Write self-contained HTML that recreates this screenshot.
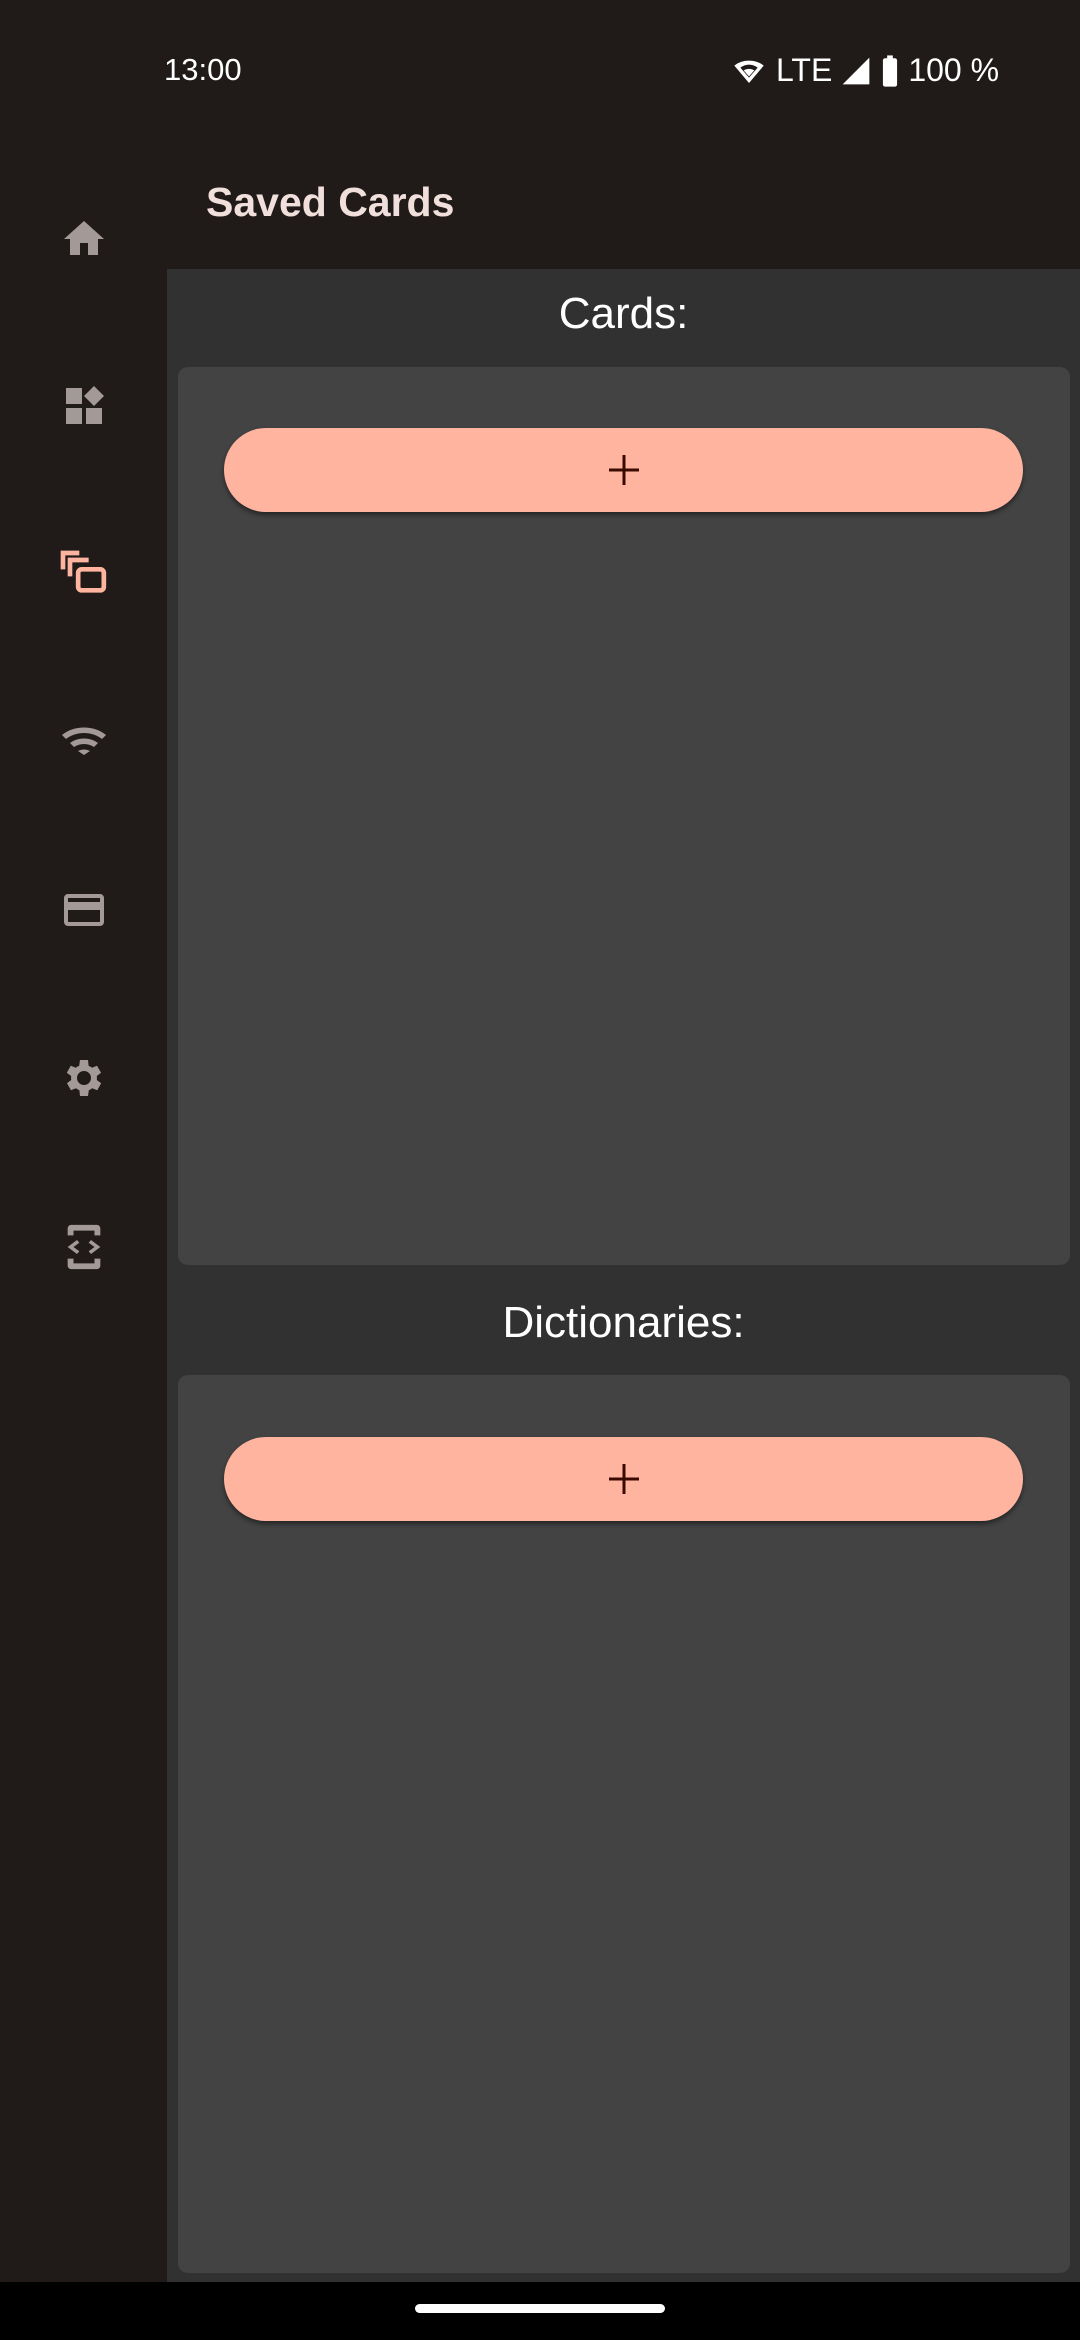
<!DOCTYPE html>
<html><head><meta charset="utf-8"><style>
*{margin:0;padding:0;box-sizing:border-box}
body{width:1080px;height:2340px;background:#201b19;position:relative;overflow:hidden;font-family:"Liberation Sans",sans-serif}
.abs{position:absolute}
.content{left:167px;top:269px;width:913px;height:2013px;background:#313131}
.panel{left:178px;width:892px;height:898px;background:#434343;border-radius:10px}
.btn{left:224px;width:799px;height:84px;background:#ffb4a0;border-radius:42px;box-shadow:0 3px 5px rgba(0,0,0,.45);display:flex;align-items:center;justify-content:center}
.lbl{left:167px;width:913px;text-align:center;color:#fff;font-size:44px}
.ic{left:60px;width:48px;height:48px}
</style></head><body>
<div class="abs" style="left:164px;top:52px;color:#fff;font-size:31px">13:00</div>
<div class="abs" style="left:730px;top:52px;color:#fff;font-size:32px;display:flex;align-items:center;gap:8px">
<svg width="38" height="32" viewBox="0 0 24 24"><path d="M12 21L1 8c6-5 16-5 22 0z" fill="#fff"/><path d="M5.5 9.5c4-3 9-3 13 0L12 17z" fill="#201b19"/><path d="M8 11.5c2.5-1.5 5.5-1.5 8 0L12 16z" fill="#fff"/></svg>
<span>LTE</span>
<svg width="32" height="32" viewBox="0 0 24 24"><path d="M22 2v20H2z" fill="#fff"/></svg>
<svg width="20" height="34" viewBox="0 0 12 24"><rect x="1" y="3" width="10" height="20" rx="1.5" fill="#fff"/><rect x="4" y="1" width="4" height="3" fill="#fff"/></svg>
<span>100 %</span></div>
<div class="abs" style="left:206px;top:179px;color:#f0dfdb;font-size:41px;font-weight:bold">Saved Cards</div>
<div class="abs content"></div>
<div class="abs lbl" style="top:289px">Cards:</div>
<div class="abs panel" style="top:367px"></div>
<div class="abs btn" style="top:428px"><svg width="36" height="36" viewBox="0 0 36 36"><path d="M18 3v30M3 18h30" stroke="#3a0a00" stroke-width="3"/></svg></div>
<div class="abs lbl" style="top:1298px">Dictionaries:</div>
<div class="abs panel" style="top:1375px"></div>
<div class="abs btn" style="top:1437px"><svg width="36" height="36" viewBox="0 0 36 36"><path d="M18 3v30M3 18h30" stroke="#3a0a00" stroke-width="3"/></svg></div>
<div class="abs" style="left:0;top:2282px;width:1080px;height:58px;background:#000"></div>
<div class="abs" style="left:415px;top:2304px;width:250px;height:9px;border-radius:5px;background:#fff"></div>
<svg class="abs ic" style="top:215px" viewBox="0 0 24 24"><path d="M10 20v-6h4v6h5v-8h3L12 3 2 12h3v8z" fill="#a39a98"/></svg>
<svg class="abs ic" style="top:382px" viewBox="0 0 24 24"><path d="M3 3h8v8H3zM3 13h8v8H3zM13 13h8v8h-8zM17 2l5 5-5 5-5-5z" fill="#a39a98"/></svg>
<svg class="abs" style="left:56px;top:546px;width:56px;height:56px" viewBox="0 0 24 24" fill="none" stroke="#ffb4a0" stroke-width="2"><path d="M3 10V3h7M6 13V6h8"/><rect x="9.5" y="10" width="11" height="9" rx="1.5"/></svg>
<svg class="abs ic" style="top:717px" viewBox="0 0 24 24"><path d="M1 9c6-5 16-5 22 0l-2 2c-5-4-13-4-18 0z M5 13c4-3 10-3 14 0l-2 2c-3-2-7-2-10 0z M9 17c2-1 4-1 6 0l-3 2z" fill="#a39a98"/></svg>
<svg class="abs ic" style="top:886px" viewBox="0 0 24 24"><path d="M4 4h16a2 2 0 0 1 2 2v12a2 2 0 0 1-2 2H4a2 2 0 0 1-2-2V6a2 2 0 0 1 2-2zm0 4h16V6H4zm0 4v6h16v-6z" fill="#a39a98"/></svg>
<svg class="abs ic" style="top:1054px" viewBox="0 0 24 24"><path d="M19.4 13a7.5 7.5 0 0 0 0-2l2.1-1.6-2-3.5-2.5 1a7 7 0 0 0-1.7-1L15 3h-4l-.4 2.9a7 7 0 0 0-1.7 1l-2.5-1-2 3.5L6.6 11a7.5 7.5 0 0 0 0 2l-2.1 1.6 2 3.5 2.5-1a7 7 0 0 0 1.7 1L11 21h4l.4-2.9a7 7 0 0 0 1.7-1l2.5 1 2-3.5zM13 15.5a3.5 3.5 0 1 1 0-7 3.5 3.5 0 0 1 0 7z" fill="#a39a98" transform="translate(-1 0)"/></svg>
<svg class="abs" style="left:56px;top:1219px;width:56px;height:56px" viewBox="0 0 24 24"><path d="M5 7V4a1.5 1.5 0 0 1 1.5-1.5h11A1.5 1.5 0 0 1 19 4v3h-2.5V5h-9v2zM5 17v3a1.5 1.5 0 0 0 1.5 1.5h11A1.5 1.5 0 0 0 19 20v-3h-2.5v2h-9v-2zM9 9l-4 3 4 3 1-1.2-2.5-1.8 2.5-1.8zM15 9l4 3-4 3-1-1.2 2.5-1.8-2.5-1.8z" fill="#a39a98"/></svg>
</body></html>
